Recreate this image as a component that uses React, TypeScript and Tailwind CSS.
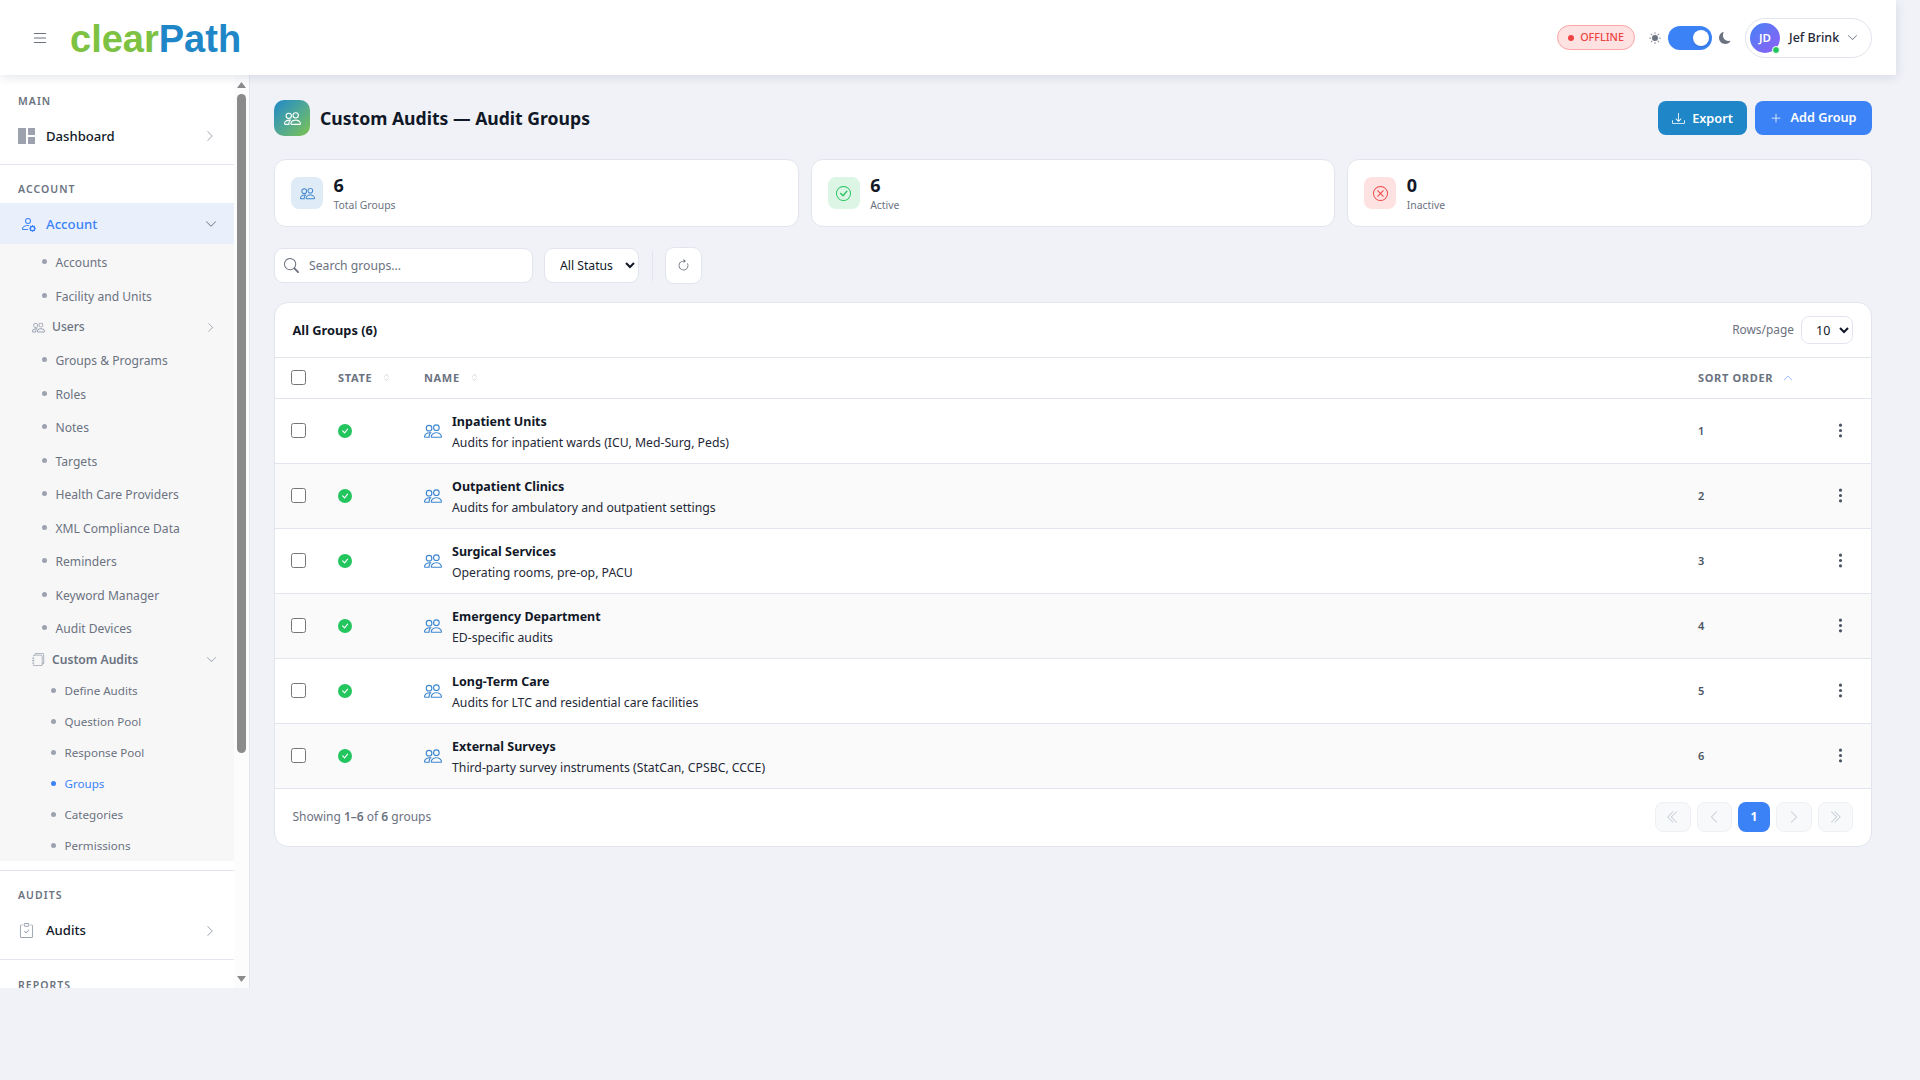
import type { ReactNode } from 'react'
import {
  BsArrowClockwise,
  BsCheck,
  BsCheckCircle,
  BsChevronDoubleLeft,
  BsChevronDoubleRight,
  BsChevronDown,
  BsChevronExpand,
  BsChevronLeft,
  BsChevronRight,
  BsChevronUp,
  BsClipboardCheck,
  BsDownload,
  BsJournals,
  BsList,
  BsMoonFill,
  BsPeople,
  BsPersonGear,
  BsPlusLg,
  BsSearch,
  BsSunFill,
  BsThreeDotsVertical,
  BsXCircle,
} from 'react-icons/bs'

const groups = [
  { name: 'Inpatient Units', desc: 'Audits for inpatient wards (ICU, Med-Surg, Peds)' },
  { name: 'Outpatient Clinics', desc: 'Audits for ambulatory and outpatient settings' },
  { name: 'Surgical Services', desc: 'Operating rooms, pre-op, PACU' },
  { name: 'Emergency Department', desc: 'ED-specific audits' },
  { name: 'Long-Term Care', desc: 'Audits for LTC and residential care facilities' },
  { name: 'External Surveys', desc: 'Third-party survey instruments (StatCan, CPSBC, CCCE)' },
]

function SectionLabel({ children }: { children: ReactNode }) {
  return (
    <p className="pl-[18px] text-[10.5px] font-semibold uppercase leading-[14px] tracking-[0.1em] text-[#6b7280]">
      {children}
    </p>
  )
}

function SubItem({ label }: { label: string }) {
  return (
    <div className="flex h-[33.5px] items-center pl-[42px] text-[12.1px] text-[#6b7280]">
      <span className="mr-[8.5px] h-[5px] w-[5px] rounded-full bg-[#9ca3af]" />
      <span className="pt-[3px]">{label}</span>
    </div>
  )
}

function NestedItem({ label, active }: { label: string; active?: boolean }) {
  return (
    <div
      className={`flex h-[31px] items-center pl-[51px] text-[11.6px] ${
        active ? 'text-[#3b82f6]' : 'text-[#6b7280]'
      }`}
    >
      <span
        className={`mr-[8.5px] h-[5px] w-[5px] rounded-full ${active ? 'bg-[#3b82f6]' : 'bg-[#9ca3af]'}`}
      />
      <span className="pt-[2px]">{label}</span>
    </div>
  )
}

function Sidebar() {
  return (
    <aside className="flex h-[913px] w-[250px] shrink-0 border-r border-[#e2e5ee] bg-[#fcfcfd]">
      <nav className="w-[234px] shrink-0 overflow-hidden bg-white">
        <div className="border-b border-[#e2e5ee] pb-2 pt-[19px]">
          <SectionLabel>Main</SectionLabel>
          <div className="mt-2 flex h-10 items-center pl-[18px] pr-[18px]">
            <svg viewBox="0 0 17 16" className="mr-[11px] h-4 w-[17px] fill-[#9ca3af]">
              <rect x="0" y="0" width="8" height="16" />
              <rect x="10" y="0" width="7" height="7" />
              <rect x="10" y="9" width="7" height="7" />
            </svg>
            <span className="flex-1 pt-px text-[13.1px] font-medium text-[#111827]">Dashboard</span>
            <BsChevronRight className="text-[12px] text-[#9ca3af]" />
          </div>
        </div>

        <div className="pt-[17px]">
          <SectionLabel>Account</SectionLabel>
          <div className="mt-[7px] flex h-[41px] items-center bg-[#e9f0fc] pl-[20px] pr-[17px]">
            <BsPersonGear className="mr-[10px] text-[16px] text-[#3b82f6]" />
            <span className="flex-1 pt-[2px] text-[13.2px] font-medium text-[#3b82f6]">Account</span>
            <BsChevronDown className="text-[12px] text-[#6b7280]" />
          </div>
          <div className="bg-[#f7f7f8] pt-px">
            <SubItem label="Accounts" />
            <SubItem label="Facility and Units" />
            <div className="flex h-[31px] items-center pl-[32px] pr-[18px] text-[12.1px] font-medium text-[#6b7280]">
              <BsPeople className="mr-[7px] text-[13px] text-[#9ca3af]" />
              <span className="flex-1">Users</span>
              <BsChevronRight className="text-[11px] text-[#9ca3af]" />
            </div>
            <SubItem label="Groups & Programs" />
            <SubItem label="Roles" />
            <SubItem label="Notes" />
            <SubItem label="Targets" />
            <SubItem label="Health Care Providers" />
            <SubItem label="XML Compliance Data" />
            <SubItem label="Reminders" />
            <SubItem label="Keyword Manager" />
            <SubItem label="Audit Devices" />
            <div className="flex h-[30px] items-center pl-[32px] pr-[17px] text-[12.1px] font-semibold text-[#6b7280]">
              <BsJournals className="mr-[7px] text-[13px] text-[#9ca3af]" />
              <span className="flex-1 pt-[2px]">Custom Audits</span>
              <BsChevronDown className="text-[11px] text-[#9ca3af]" />
            </div>
            <NestedItem label="Define Audits" />
            <NestedItem label="Question Pool" />
            <NestedItem label="Response Pool" />
            <NestedItem label="Groups" active />
            <NestedItem label="Categories" />
            <NestedItem label="Permissions" />
          </div>
        </div>

        <div className="mt-[9px] border-y border-[#e2e5ee] pb-2 pt-[17px]">
          <SectionLabel>Audits</SectionLabel>
          <div className="mt-[9px] flex h-10 items-center pl-[19px] pr-[18px]">
            <BsClipboardCheck className="mr-[12px] text-[15px] text-[#9ca3af]" />
            <span className="flex-1 text-[13.1px] font-medium text-[#111827]">Audits</span>
            <BsChevronRight className="text-[12px] text-[#9ca3af]" />
          </div>
        </div>

        <div className="pt-[18px]">
          <SectionLabel>Reports</SectionLabel>
        </div>
      </nav>

      {/* classic scrollbar, drawn because the sidebar does not actually scroll here */}
      <div className="flex w-[15px] flex-col items-center pb-[6px] pt-[7px]">
        <svg viewBox="0 0 9 6" className="h-[6px] w-[9px] fill-[#8b8b8b]">
          <path d="M4.5 0 9 6H0z" />
        </svg>
        <div className="mt-[6px] h-[659px] w-[9px] rounded-full bg-[#8b8b8b]" />
        <div className="flex-1" />
        <svg viewBox="0 0 9 6" className="h-[6px] w-[9px] fill-[#8b8b8b]">
          <path d="M0 0h9L4.5 6z" />
        </svg>
      </div>
    </aside>
  )
}

function Header() {
  return (
    <header className="relative z-10 flex h-[75px] items-center bg-white pr-6 shadow-[0_2px_10px_rgba(60,70,100,0.14)]">
      <BsList className="ml-[31px] text-[18px] text-[#6b7280]" />
      <span className="ml-[21px] pt-[2px] font-['Liberation_Sans',sans-serif] text-[38px] font-bold leading-none">
        <span className="text-[#7dc242]">clear</span>
        <span className="text-[#1f87c7]">Path</span>
      </span>
      <div className="flex-1" />
      <div className="flex h-[25px] items-center rounded-full border border-[#fca5a5] bg-[#fee2e2] pl-[10px] pr-[10px] text-[10.8px] font-medium text-[#ef4444]">
        <span className="mr-[6px] h-[6px] w-[6px] rounded-full bg-[#ef4444]" />
        OFFLINE
      </div>
      <BsSunFill className="ml-[14px] text-[12px] text-[#6b7280]" />
      <div className="ml-[7px] flex h-6 w-11 items-center justify-end rounded-full bg-[#3b82f6] pr-[3px]">
        <span className="h-4 w-4 rounded-full bg-white shadow" />
      </div>
      <BsMoonFill className="ml-[7px] text-[12px] text-[#6b7280]" />
      <div className="ml-[14px] flex h-10 w-[127px] items-center rounded-full border border-[#e2e5ee] pl-[4px]">
        <div className="relative flex h-[30px] w-[30px] items-center justify-center rounded-full bg-linear-to-br from-[#3b82f6] to-[#8b5cf6] text-[11.5px] font-semibold text-white">
          JD
          <span className="absolute -bottom-px right-0 h-2 w-2 rounded-full border border-white bg-[#22c55e]" />
        </div>
        <span className="ml-[9px] flex-1 pt-[2px] text-[12.5px] font-medium text-[#1f2937]">Jef Brink</span>
        <BsChevronDown className="mr-[13px] text-[11px] text-[#6b7280]" />
      </div>
    </header>
  )
}

function StatCard({
  value,
  label,
  icon,
  tone,
}: {
  value: number
  label: string
  icon: ReactNode
  tone: string
}) {
  return (
    <div className="flex h-[68px] items-center rounded-[12px] border border-[#e2e5ee] bg-white px-4">
      <div className={`flex h-8 w-8 items-center justify-center rounded-lg text-[15px] ${tone}`}>{icon}</div>
      <div className="ml-[10.5px]">
        <p className="text-[18px] font-bold leading-[20px] text-[#111827]">{value}</p>
        <p className="mt-[3px] text-[10.4px] leading-[14px] text-[#6b7280]">{label}</p>
      </div>
    </div>
  )
}

function PageButton({ children, active }: { children: ReactNode; active?: boolean }) {
  return (
    <div
      className={`flex h-[30px] items-center justify-center rounded-lg ${
        active
          ? 'w-8 bg-[#3b82f6] text-[12px] font-bold text-white'
          : 'w-[35.5px] border border-[#eef0f4] bg-[#f8f9fb] text-[14px] text-[#c3c8d2]'
      }`}
    >
      {children}
    </div>
  )
}

function GroupsTable() {
  return (
    <section className="mt-[18px] overflow-hidden rounded-[14px] border border-[#e2e5ee] bg-white">
      <div className="flex h-[55px] items-center border-b border-[#e2e5ee] pl-[17.5px] pr-[18px]">
        <h2 className="flex-1 pt-px text-[12.8px] font-bold text-[#111827]">All Groups (6)</h2>
        <span className="mr-[7px] text-[11.9px] text-[#6b7280]">Rows/page</span>
        <select className="h-[28px] w-[52px] rounded-lg border border-[#e2e5ee] bg-white pl-[10px] text-[12.5px] text-[#111827]">
          <option>10</option>
        </select>
      </div>

      <table className="w-full table-fixed border-collapse">
        <colgroup>
          <col className="w-[63px]" />
          <col className="w-[86px]" />
          <col />
          <col className="w-[111px]" />
          <col className="w-[62px]" />
        </colgroup>
        <thead>
          <tr className="h-10 border-b border-[#e2e5ee] text-left text-[11px] font-bold tracking-[0.06em] text-[#6b7280]">
            <th className="pl-4 font-bold">
              <input type="checkbox" className="block h-[15px] w-[15px]" />
            </th>
            <th className="font-bold">
              <span className="flex items-center">
                STATE
                <BsChevronExpand className="ml-[10px] text-[9px] text-[#c3c8d2]" />
              </span>
            </th>
            <th className="font-bold">
              <span className="flex items-center">
                NAME
                <BsChevronExpand className="ml-[10px] text-[9px] text-[#c3c8d2]" />
              </span>
            </th>
            <th className="font-bold">
              <span className="flex items-center whitespace-nowrap">
                SORT ORDER
                <BsChevronUp className="ml-[10px] text-[10px] text-[#6f9ff5]" />
              </span>
            </th>
            <th />
          </tr>
        </thead>
        <tbody>
          {groups.map((g, i) => (
            <tr
              key={g.name}
              className={`h-[65px] border-b border-[#e2e5ee] ${i % 2 === 1 ? 'bg-[#fafafb]' : ''}`}
            >
              <td className="pl-4">
                <input type="checkbox" className="block h-[15px] w-[15px]" />
              </td>
              <td>
                <span className="flex h-[14px] w-[14px] items-center justify-center rounded-full bg-[#22c55e] text-[12px] text-white">
                  <BsCheck />
                </span>
              </td>
              <td>
                <div className="flex items-center">
                  <BsPeople className="mr-[10px] text-[18px] text-[#3d86cf]" />
                  <div className="pt-[3px]">
                    <p className="text-[12.5px] font-bold leading-[20px] text-[#111827]">{g.name}</p>
                    <p className="mt-px text-[12.25px] leading-[20px] text-[#1f2937]">{g.desc}</p>
                  </div>
                </div>
              </td>
              <td className="pt-px text-[11px] font-semibold text-[#4b5563]">{i + 1}</td>
              <td>
                <BsThreeDotsVertical className="mx-auto text-[17px] text-[#4b5563]" />
              </td>
            </tr>
          ))}
        </tbody>
      </table>

      <div className="flex h-[57px] items-center pl-[17.5px] pr-[18px]">
        <p className="flex-1 text-[12px] text-[#6b7280]">
          Showing <b className="font-semibold">1–6</b> of <b className="font-semibold">6</b> groups
        </p>
        <div className="flex items-center gap-[6px]">
          <PageButton>
            <BsChevronDoubleLeft />
          </PageButton>
          <PageButton>
            <BsChevronLeft />
          </PageButton>
          <PageButton active>1</PageButton>
          <PageButton>
            <BsChevronRight />
          </PageButton>
          <PageButton>
            <BsChevronDoubleRight />
          </PageButton>
        </div>
      </div>
    </section>
  )
}

export default function App() {
  return (
    <div className="h-[1080px] w-full overflow-hidden bg-[#f0f2f7] font-['Noto_Sans',sans-serif]">
      <div className="w-[1896px]">
        <Header />
        <div className="flex">
          <Sidebar />
          <main className="min-w-0 flex-1 px-6 pt-[25px]">
            <div className="flex h-9 items-center">
              <div className="flex h-9 w-9 items-center justify-center rounded-[10px] bg-linear-to-br from-[#1f87c7] to-[#7dc242] text-[17px] text-white">
                <BsPeople />
              </div>
              <h1 className="ml-[10px] flex-1 text-[17.6px] font-bold text-[#111827]">
                Custom Audits — Audit Groups
              </h1>
              <button className="flex h-[34px] w-[89px] items-center justify-center rounded-lg bg-[#1f87c7] pt-px text-[12.7px] font-semibold text-white">
                <BsDownload className="mr-[7px] text-[13px]" />
                Export
              </button>
              <button className="ml-2 flex h-[34px] w-[117px] items-center justify-center rounded-lg bg-[#3b82f6] text-[12.7px] font-semibold text-white">
                <BsPlusLg className="mr-[8px] text-[12px]" />
                Add Group
              </button>
            </div>

            <div className="mt-[23px] grid grid-cols-3 gap-3">
              <StatCard value={6} label="Total Groups" icon={<BsPeople />} tone="bg-[#dfebf7] text-[#3d86cf]" />
              <StatCard value={6} label="Active" icon={<BsCheckCircle />} tone="bg-[#dcf5e5] text-[#22c55e]" />
              <StatCard value={0} label="Inactive" icon={<BsXCircle />} tone="bg-[#fee2e2] text-[#ef4444]" />
            </div>

            <div className="mt-[20px] flex items-center">
              <div className="flex h-[35px] w-[259px] items-center rounded-[9px] border border-[#e2e5ee] bg-white pl-[9px]">
                <BsSearch className="mr-[10px] shrink-0 text-[15px] text-[#6b7280]" />
                <input
                  placeholder="Search groups..."
                  className="w-full bg-transparent pt-[2px] text-[12.2px] outline-none placeholder:text-[#6b7280]"
                />
              </div>
              <select className="ml-[11px] h-[35px] w-[95px] rounded-[9px] border border-[#e2e5ee] bg-white pl-[11px] text-[12.2px] text-[#111827]">
                <option>All Status</option>
              </select>
              <span className="ml-[13px] h-[30px] w-px bg-[#e2e5ee]" />
              <button className="ml-3 flex h-[37px] w-[37px] items-center justify-center rounded-[9px] border border-[#e2e5ee] bg-white text-[13px] text-[#6b7280]">
                <BsArrowClockwise />
              </button>
            </div>

            <GroupsTable />
          </main>
        </div>
      </div>
    </div>
  )
}
